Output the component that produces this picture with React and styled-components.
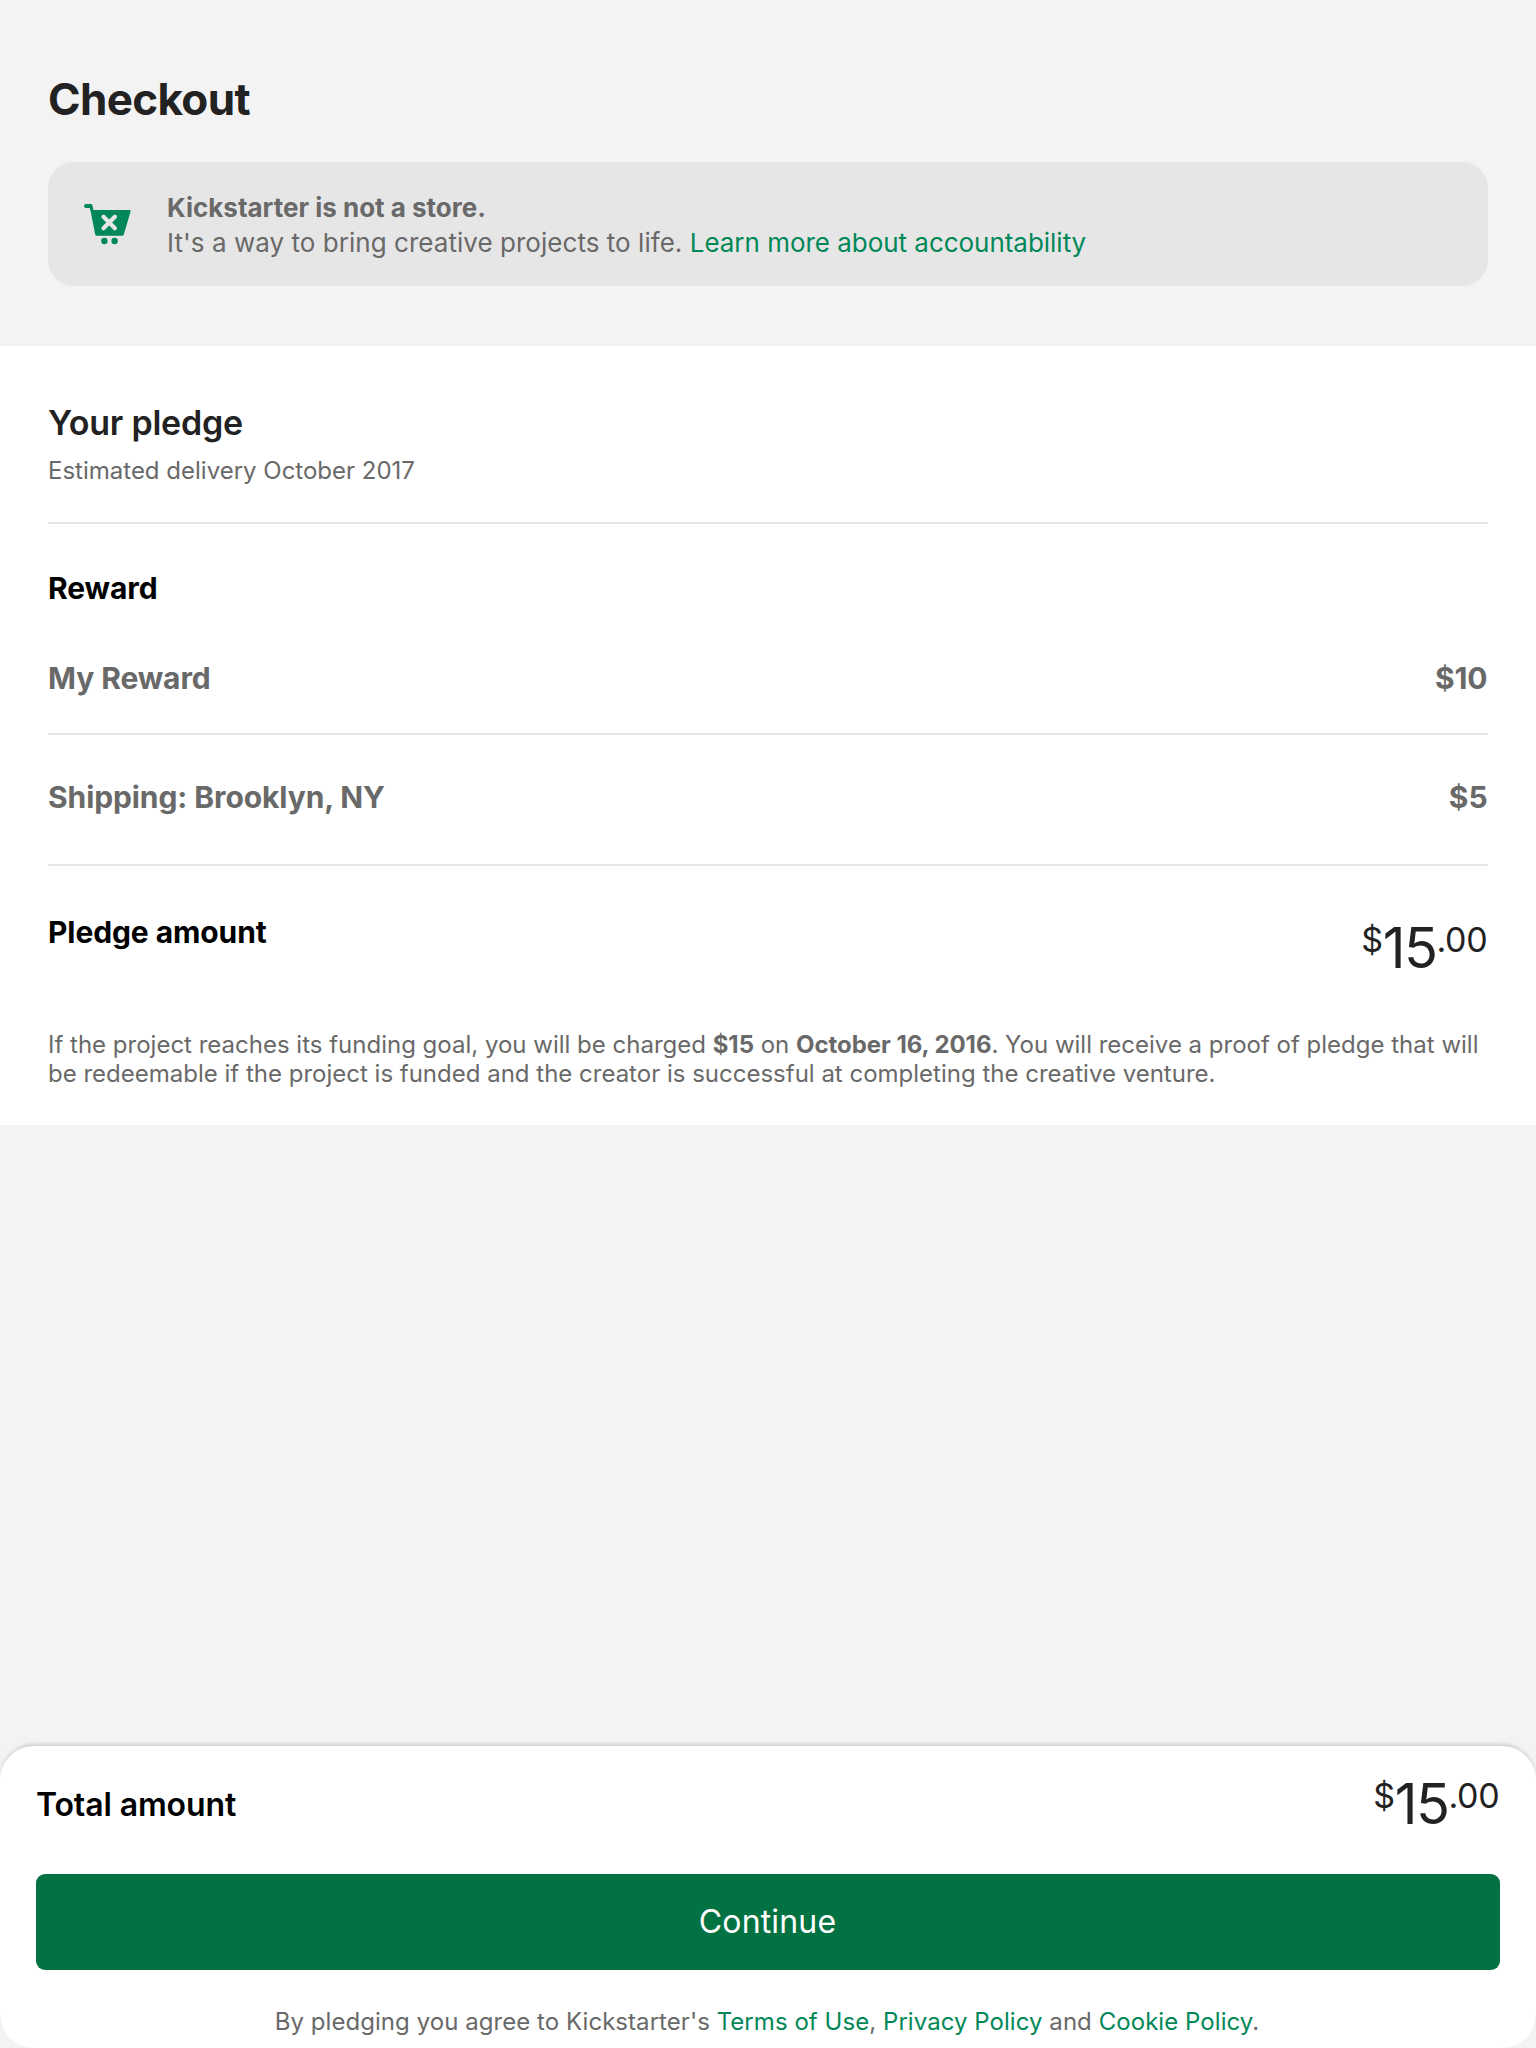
import React from "react";
import styled, { createGlobalStyle } from "styled-components";

const GlobalStyle = createGlobalStyle`
  *, *::before, *::after { box-sizing: border-box; }
  body {
    margin: 0;
    background: #f3f3f3;
    font-family: Inter, "Liberation Sans", sans-serif;
    color: #222222;
  }
  h1, h2, h3, p { margin: 0; }
`;

const Page = styled.div`
  display: flex;
  flex-direction: column;
  height: 2048px;
  background: #f3f3f3;
`;

const Header = styled.header`
  padding: 72px 48px 60px;
`;

const Title = styled.h1`
  font-size: 44px;
  line-height: 54px;
  font-weight: 700;
  letter-spacing: -0.65px;
  margin-bottom: 36px;
`;

const Notice = styled.section`
  display: flex;
  align-items: flex-start;
  height: 124px;
  padding: 28px 36px 0;
  gap: 36px;
  border-radius: 26px;
  background: #e6e6e6;
  color: #696969;
  font-size: 26px;
  line-height: 35px;
`;

const CartIcon = styled.svg`
  flex: none;
  width: 47px;
  height: 42px;
  margin-top: 13px;
`;

const NoticeTitle = styled.p`
  font-weight: 700;
`;

const NoticeText = styled.p`
  font-weight: 400;
  letter-spacing: 0.04px;
`;

const Link = styled.a`
  color: #028858;
  text-decoration: none;
  cursor: pointer;
  letter-spacing: ${(p) => p.$track || "inherit"};
`;

const Summary = styled.main`
  background: #ffffff;
  padding: 56px 48px 37px;
`;

const Heading = styled.h2`
  font-size: 34px;
  line-height: 42px;
  font-weight: 600;
  letter-spacing: -0.22px;
`;

const Delivery = styled.p`
  margin-top: 12px;
  font-size: 24px;
  line-height: 30px;
  color: #696969;
`;

const Divider = styled.hr`
  height: 2px;
  border: 0;
  background: #e6e6e6;
  margin: ${(p) => p.$top}px 0 ${(p) => p.$bottom}px;
`;

const Row = styled.div`
  display: flex;
  justify-content: space-between;
  align-items: flex-start;
  padding-right: 0.5px;
  font-size: 30px;
  line-height: 36px;
  font-weight: 700;
  letter-spacing: -0.09px;
  color: ${(p) => (p.$strong ? "#000000" : "#696969")};
  margin-bottom: ${(p) => p.$gap || 0}px;
`;

const Amount = styled.span`
  display: flex;
  align-items: flex-start;
  font-size: 56px;
  line-height: 68px;
  font-weight: 400;
  color: #222222;
  letter-spacing: -1.6px;
`;

const Small = styled.span`
  font-size: 34px;
  line-height: 52px;
  letter-spacing: -0.25px;
`;

const Terms = styled.p`
  margin-top: 48px;
  font-size: 24px;
  line-height: 29px;
  color: #696969;

  b { letter-spacing: -0.05px; }
`;

const Footer = styled.footer`
  margin-top: auto;
  height: 302px;
  padding: 24px 36px 0;
  background: #ffffff;
  border-radius: 34px;
  box-shadow: 0 -3px 5px -2px rgba(0, 0, 0, 0.22);
`;

const TotalRow = styled.div`
  display: flex;
  justify-content: space-between;
  align-items: flex-start;
  padding-right: 0.5px;
`;

const TotalLabel = styled.span`
  margin-top: 15px;
  font-size: 32px;
  line-height: 39px;
  font-weight: 600;
  letter-spacing: -0.12px;
  color: #000000;
`;

const Button = styled.button`
  display: flex;
  align-items: center;
  justify-content: center;
  width: 100%;
  height: 96px;
  margin-top: 36px;
  padding: 0 1px 2px 0;
  border: 0;
  border-radius: 9px;
  background: #037242;
  color: #ffffff;
  font: 400 32px/39px Inter, "Liberation Sans", sans-serif;
  letter-spacing: 0.15px;
`;

const Legal = styled.p`
  margin-top: 37px;
  padding-right: 2px;
  text-align: center;
  font-size: 24px;
  line-height: 29px;
  letter-spacing: 0.05px;
  color: #696969;
`;

function Price() {
  return (
    <Amount>
      <Small>$</Small>
      <span>15</span>
      <Small>.00</Small>
    </Amount>
  );
}

export default function App() {
  return (
    <>
      <GlobalStyle />
      <Page>
        <Header>
          <Title>Checkout</Title>
          <Notice>
            <CartIcon viewBox="0 0 47 42" aria-hidden="true">
              <path
                fill="#028858"
                d="M2 1H7Q8 1 8.300 2L9.500 7H45.500Q47 7 46.600 8.400L39.800 31.500Q39.400 32.800 38 32.800H12.700Q11.500 32.800 11.200 31.500L6.800 9L5.800 5H2A2 2 0 0 1 2 1Z"
              />
              <path
                stroke="#e6e6e6"
                strokeWidth="4.200"
                strokeLinecap="round"
                d="M19.500 13.800L30.900 25.200M30.900 13.800L19.500 25.200"
              />
              <circle cx="20.400" cy="38" r="3.200" fill="#028858" />
              <circle cx="30.600" cy="38" r="3.200" fill="#028858" />
            </CartIcon>
            <div>
              <NoticeTitle>Kickstarter is not a store.</NoticeTitle>
              <NoticeText>
                It's a way to bring creative projects to life.{" "}
                <Link $track="-0.03px">Learn more about accountability</Link>
              </NoticeText>
            </div>
          </Notice>
        </Header>

        <Summary>
          <Heading>Your pledge</Heading>
          <Delivery>Estimated delivery October 2017</Delivery>
          <Divider $top={36} $bottom={46} />
          <Row $strong $gap={54}>
            <span>Reward</span>
          </Row>
          <Row>
            <span>My Reward</span>
            <span>$10</span>
          </Row>
          <Divider $top={37} $bottom={44} />
          <Row>
            <span>Shipping: Brooklyn, NY</span>
            <span>$5</span>
          </Row>
          <Divider $top={49} $bottom={48} />
          <Row $strong>
            <span>Pledge amount</span>
            <Price />
          </Row>
          <Terms>
            If the project reaches its funding goal, you will be charged <b>$15</b> on <b>October 16, 2016</b>. You will
            receive a proof of pledge that will be redeemable if the project is funded and the creator is successful at
            completing the creative venture.
          </Terms>
        </Summary>

        <Footer>
          <TotalRow>
            <TotalLabel>Total amount</TotalLabel>
            <Price />
          </TotalRow>
          <Button>Continue</Button>
          <Legal>
            By pledging you agree to Kickstarter's <Link>Terms of Use</Link>, <Link>Privacy Policy</Link> and{" "}
            <Link>Cookie Policy</Link>.
          </Legal>
        </Footer>
      </Page>
    </>
  );
}
